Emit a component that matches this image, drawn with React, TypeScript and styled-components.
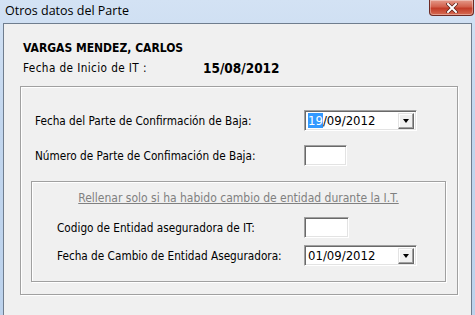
import React from 'react';
import styled, { createGlobalStyle } from 'styled-components';

const GlobalStyle = createGlobalStyle`
	html, body {
		margin: 0;
		padding: 0;
		background: #c4d7ee;
	}
`;

const uiFont = `'DejaVu Sans Condensed', 'DejaVu Sans', sans-serif`;

const Window = styled.div`
	width: 475px;
	height: 315px;
	display: flex;
	flex-direction: column;
	background: linear-gradient(180deg, #d3e2f4 0%, #c2d6ee 40%, #bcd2ec 100%);
	overflow: hidden;
`;

const TitleBar = styled.div`
	height: 23px;
	display: flex;
	align-items: flex-start;
	justify-content: space-between;
	flex-shrink: 0;
`;

const Title = styled.span`
	font-family: 'Open Sans', 'Noto Sans', sans-serif;
	font-size: 12.5px;
	line-height: 22px;
	color: #000;
	padding-left: 5px;
`;

const CloseButton = styled.div`
	width: 45px;
	height: 16px;
	margin-right: 1px;
	box-sizing: border-box;
	border: 1px solid #6d2a24;
	border-top: none;
	border-radius: 0 0 4px 4px;
	background: linear-gradient(180deg, #e49a8a 0%, #d2604c 45%, #c23c28 55%, #d66c54 100%);
	display: flex;
	align-items: center;
	justify-content: center;
	box-shadow: inset 0 0 0 1px rgba(255, 255, 255, 0.35);
`;

const Body = styled.div`
	flex: 1;
	margin: 0 3px;
	background: #f0f0f0;
	border: 1px solid #6f7d8e;
	border-bottom: none;
	font-family: ${uiFont};
	font-size: 11.7px;
	color: #000;
	padding: 17px 0 0 19px;
	box-sizing: border-box;
`;

const Name = styled.div`
	font-weight: bold;
	font-size: 12px;
	line-height: 14px;
`;

const InfoRow = styled.div`
	display: flex;
	margin-top: 6px;
	line-height: 14px;
`;

const InfoLabel = styled.span`
	width: 180px;
	letter-spacing: 0.4px;
`;

const InfoValue = styled.span`
	font-weight: bold;
	font-size: 13.5px;
`;

const GroupBox = styled.div<{ $width: number; $height: number; $left: number; $top: number }>`
	box-sizing: border-box;
	width: ${(p) => p.$width}px;
	height: ${(p) => p.$height}px;
	margin-left: ${(p) => p.$left}px;
	margin-top: ${(p) => p.$top}px;
	border: 1px solid #a0a0a0;
	box-shadow: inset 1px 1px 0 #fff, 1px 1px 0 #fff;
	display: flex;
	flex-direction: column;
`;

const FieldGrid = styled.div<{ $label: number; $gap: number; $pad: string }>`
	display: grid;
	grid-template-columns: ${(p) => p.$label}px auto;
	row-gap: ${(p) => p.$gap}px;
	align-items: center;
	padding: ${(p) => p.$pad};
`;

const Label = styled.span`
	line-height: 14px;
	white-space: nowrap;
`;

const Sunken = styled.div<{ $width: number }>`
	box-sizing: border-box;
	width: ${(p) => p.$width}px;
	height: 21px;
	background: #fff;
	border-top: 1px solid #a0a0a0;
	border-left: 1px solid #a0a0a0;
	border-right: 1px solid #fff;
	border-bottom: 1px solid #fff;
	box-shadow: inset 1px 1px 0 #696969, inset -1px -1px 0 #e3e3e3;
	display: flex;
	align-items: center;
	justify-content: space-between;
	padding: 0 2px 0 3px;
	font-size: 13px;
`;

const Selected = styled.span`
	background: #3399ff;
	color: #fff;
`;

const DropButton = styled.div`
	width: 16px;
	height: 16px;
	box-sizing: border-box;
	background: #f0f0f0;
	border-top: 1px solid #e3e3e3;
	border-left: 1px solid #e3e3e3;
	border-right: 1px solid #696969;
	border-bottom: 1px solid #696969;
	box-shadow: inset -1px -1px 0 #a0a0a0, inset 1px 1px 0 #fff;
	display: flex;
	align-items: center;
	justify-content: center;
`;

const Arrow = styled.span`
	width: 0;
	height: 0;
	border-left: 3px solid transparent;
	border-right: 3px solid transparent;
	border-top: 4px solid #000;
`;

const Note = styled.div`
	color: #808080;
	text-decoration: underline;
	text-align: center;
	line-height: 14px;
	margin-top: 9px;
	font-size: 12px;
`;

const DateCombo = ({ value, selected }: { value: string; selected?: string }) => (
	<Sunken $width={113}>
		<span>
			{selected && <Selected>{selected}</Selected>}
			{value}
		</span>
		<DropButton>
			<Arrow />
		</DropButton>
	</Sunken>
);

const App = () => {
	return (
		<>
			<GlobalStyle />
			<Window>
				<TitleBar>
					<Title>Otros datos del Parte</Title>
					<CloseButton>
						<svg width="12" height="10" viewBox="0 0 12 10">
							<path d="M2 1 L10 9 M10 1 L2 9" stroke="#5a2018" strokeWidth="3.4" strokeLinecap="square" />
							<path d="M2 1 L10 9 M10 1 L2 9" stroke="#fff" strokeWidth="2" strokeLinecap="square" />
						</svg>
					</CloseButton>
				</TitleBar>
				<Body>
					<Name>VARGAS MENDEZ, CARLOS</Name>
					<InfoRow>
						<InfoLabel>Fecha de Inicio de IT :</InfoLabel>
						<InfoValue>15/08/2012</InfoValue>
					</InfoRow>
					<GroupBox $width={438} $height={209} $left={-3} $top={11}>
						<FieldGrid $label={269} $gap={14} $pad="23px 0 0 14px">
							<Label>Fecha del Parte de Confirmación de Baja:</Label>
							<DateCombo selected="19" value="/09/2012" />
							<Label>Número de Parte de Confimación de Baja:</Label>
							<Sunken $width={43} />
						</FieldGrid>
						<GroupBox $width={415} $height={101} $left={10} $top={15}>
							<Note>Rellenar solo si ha habido cambio de entidad durante la I.T.</Note>
							<FieldGrid $label={247} $gap={7} $pad="12px 0 0 25px">
								<Label>Codigo de Entidad aseguradora de IT:</Label>
								<Sunken $width={45} />
								<Label>Fecha de Cambio de Entidad Aseguradora:</Label>
								<DateCombo value="01/09/2012" />
							</FieldGrid>
						</GroupBox>
					</GroupBox>
				</Body>
			</Window>
		</>
	);
};

export default App;
